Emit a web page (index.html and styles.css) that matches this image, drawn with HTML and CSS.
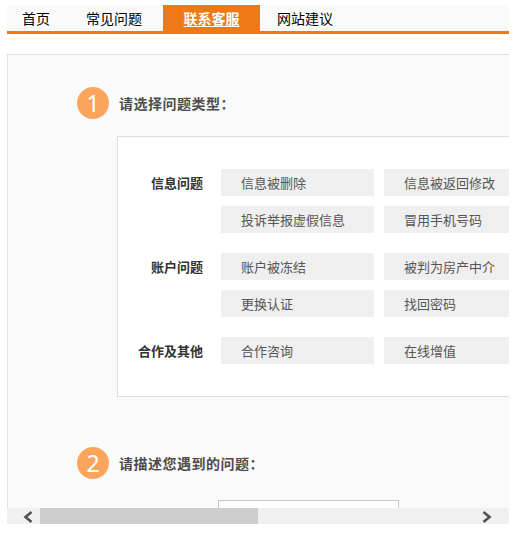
FILE: index.html
```html
<!DOCTYPE html>
<html lang="zh-CN">
<head>
<meta charset="utf-8">
<title>联系客服</title>
<link rel="stylesheet" href="styles.css">
</head>
<body>
<div class="frame">
  <div class="viewport">
    <div class="page">
      <nav class="tabs">
        <a class="tab tab-home">首页</a>
        <a class="tab tab-faq">常见问题</a>
        <a class="tab tab-contact active">联系客服</a>
        <a class="tab tab-suggest">网站建议</a>
      </nav>
      <div class="panel">
        <section class="step">
          <div class="step-head"><span class="num">1</span><h2 class="step-title">请选择问题类型：</h2></div>
          <div class="types">
            <div class="group">
              <div class="label">信息问题</div>
              <div class="opts">
                <a class="opt">信息被删除</a>
                <a class="opt">信息被返回修改</a>
                <a class="opt">投诉举报虚假信息</a>
                <a class="opt">冒用手机号码</a>
              </div>
            </div>
            <div class="group">
              <div class="label">账户问题</div>
              <div class="opts">
                <a class="opt">账户被冻结</a>
                <a class="opt">被判为房产中介</a>
                <a class="opt">更换认证</a>
                <a class="opt">找回密码</a>
              </div>
            </div>
            <div class="group">
              <div class="label">合作及其他</div>
              <div class="opts">
                <a class="opt">合作咨询</a>
                <a class="opt">在线增值</a>
              </div>
            </div>
          </div>
        </section>
        <section class="step step-desc">
          <div class="step-head"><span class="num">2</span><h2 class="step-title">请描述您遇到的问题：</h2></div>
          <div class="desc"><input class="field" type="text"></div>
        </section>
      </div>
    </div>
  </div>
  <div class="hscroll">
    <span class="sb-btn sb-left"><svg width="33" height="16" viewBox="0 0 33 16"><polyline points="24.5,4 18.5,9 24.5,14" fill="none" stroke="#505050" stroke-width="2.6"/></svg></span>
    <span class="sb-thumb"></span>
    <span class="sb-track"></span>
    <span class="sb-btn sb-right"><svg width="33" height="16" viewBox="0 0 33 16"><polyline points="7.5,4 13.5,9 7.5,14" fill="none" stroke="#505050" stroke-width="2.6"/></svg></span>
  </div>
</div>
</body>
</html>
```
FILE: styles.css
```css
html, body {
  margin: 0;
  padding: 0;
  background: #fff;
}
body {
  font-family: "Noto Sans CJK SC", "Noto Sans", sans-serif;
  font-size: 14px;
  color: #000;
}
.frame {
  margin: 5px 0 0 7px;
  width: 502px;
}
.viewport {
  height: 503px;
  overflow: hidden;
}
.hscroll {
  display: flex;
  height: 16px;
  background: #f0f0f0;
}
.sb-btn {
  display: block;
  width: 33px;
  height: 16px;
}
.sb-btn svg {
  display: block;
}
.sb-thumb {
  display: block;
  width: 218px;
  height: 16px;
  background: #cdcdcd;
}
.sb-track {
  flex: 1;
}
.page {
  width: 1004px;
}
.tabs {
  display: flex;
  height: 26px;
  background: #fafafa;
  border-bottom: 3px solid #ef7a15;
}
.tab {
  display: block;
  height: 26px;
  line-height: 26px;
  text-align: center;
  font-size: 14px;
  color: #000;
}
.tab-home { width: 58px; }
.tab-faq { width: 98px; }
.tab-contact { width: 97px; }
.tab-suggest { width: 90px; }
.tab.active {
  background: #ef7a15;
  color: #fff;
  font-weight: bold;
  text-decoration: underline;
  text-decoration-thickness: 1px;
  text-underline-offset: 2px;
}
.panel {
  margin-top: 20px;
  border: 1px solid #e2e2e2;
  background: #fafafa;
  padding: 32px 0 120px 69px;
}
.step-head {
  display: flex;
  align-items: center;
  gap: 10px;
  height: 32px;
}
.num {
  width: 32px;
  height: 32px;
  border-radius: 50%;
  background: #fba55c;
  color: #fff;
  font-family: "Noto Sans", "Liberation Sans", sans-serif;
  font-size: 23px;
  line-height: 32px;
  text-align: center;
}
.step-title {
  margin: 0;
  font-size: 14px;
  font-weight: bold;
  color: #4d4d4d;
  letter-spacing: 0.5px;
}
.types {
  margin: 17px 0 0 40px;
  border: 1px solid #dcdcdc;
  background: #fff;
  padding: 32px 0;
  display: flex;
  flex-direction: column;
  gap: 20px;
}
.group {
  display: flex;
}
.label {
  width: 85px;
  margin-right: 18px;
  text-align: right;
  line-height: 27px;
  font-size: 13px;
  font-weight: bold;
  color: #333;
}
.opts {
  display: grid;
  grid-template-columns: 153px 153px;
  gap: 10px;
}
.opt {
  display: block;
  height: 27px;
  line-height: 27px;
  padding-left: 20px;
  background: #efefef;
  font-size: 13px;
  color: #555;
}
.step-desc {
  margin-top: 50px;
}
.desc {
  margin: 21px 0 0 141px;
}
.field {
  display: block;
  box-sizing: border-box;
  width: 181px;
  height: 30px;
  margin: 0;
  border: 1px solid #c8c8c8;
  background: #fff;
}
```
